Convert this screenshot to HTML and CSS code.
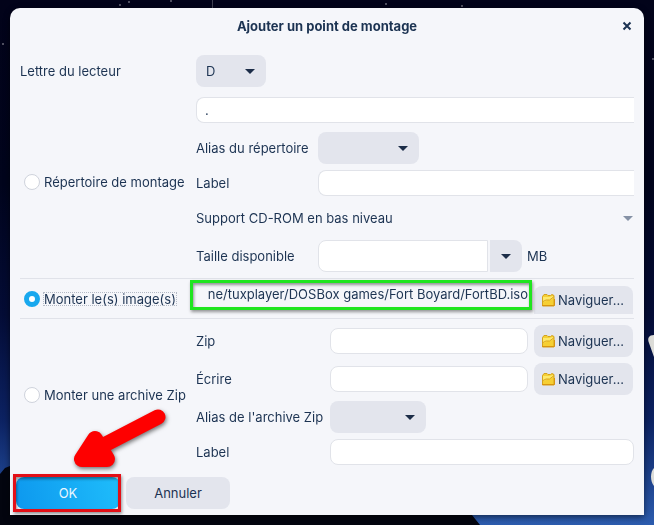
FILE: index.html
```html
<!DOCTYPE html>
<html lang="fr">
<head>
<meta charset="utf-8">
<meta name="viewport" content="width=device-width, initial-scale=1">
<title>Ajouter un point de montage</title>
<link rel="stylesheet" href="styles.css">
</head>
<body>
<svg class="sky" viewBox="0 0 654 525" preserveAspectRatio="none" aria-hidden="true">
  <defs>
    <linearGradient id="night" x1="0" y1="0" x2="0" y2="1">
      <stop offset="0" stop-color="#02031a"/>
      <stop offset=".35" stop-color="#01041c"/>
      <stop offset=".6" stop-color="#040c36"/>
      <stop offset=".8" stop-color="#0c2262"/>
      <stop offset="1" stop-color="#2c5cae"/>
    </linearGradient>
    <symbol id="folder" viewBox="0 0 14 14">
      <path d="M1.500 3.500 3 1.500h3l1 1h2.500L11 1.500l2 1V13H1.500z" fill="#f6cf33" stroke="#d3a21f"/>
      <path d="M2 4h6l4-1v2L9 7H6L4 8.500H2z" fill="#fde96b"/>
      <path d="M2 8.500 5 7h3.500L12.500 4" fill="none" stroke="#dba620"/>
      <path d="M1 12.500h12.500V6" fill="none" stroke="#d9940f"/>
    </symbol>
  </defs>
  <rect width="654" height="525" fill="url(#night)"/>
  <path d="M0 474 5 468 10 466V510H440L472 515 480 525H0z" fill="#03050f"/>
  <g fill="#6a6a78"><circle cx="120" cy="5" r="1"/><circle cx="129" cy="2" r="1"/><circle cx="171" cy="1" r="1"/><path d="M212 0h1v8h-1z" opacity=".6"/><circle cx="386" cy="4" r="1"/><circle cx="462" cy="6" r="1"/><circle cx="3" cy="44" r="1"/><circle cx="653" cy="59" r="1"/></g>
  <path d="M654 335c-5 0-7 3-5 8l5 14zM654 468c-4 4-4 13 0 18z" fill="#dcdcd8"/>
</svg>

<form class="dialog">
  <header class="titlebar">
    <h1>Ajouter un point de montage</h1>
    <button class="close" type="button" aria-label="Fermer">
      <svg viewBox="0 0 10 10" aria-hidden="true"><path d="m1.500 1.500 7 7M8.500 1.500l-7 7"/></svg>
    </button>
  </header>

  <div class="section drive">
    <label for="letter">Lettre du lecteur</label>
    <span class="drop letter"><select id="letter"><option>D</option></select></span>
  </div>

  <div class="section directory">
    <label class="choice"><input type="radio" name="kind">Répertoire de montage</label>
    <div class="fields">
      <input class="cut full" type="text" value="." aria-label="Répertoire">
      <label for="alias">Alias du répertoire</label>
      <span class="drop alias"><select id="alias"><option></option></select></span>
      <label for="dirlabel">Label</label>
      <input class="cut" id="dirlabel" type="text">
      <div class="lowlevel full"><label for="cdrom">Support CD-ROM en bas niveau</label><span class="drop flat"><select id="cdrom"><option></option></select></span></div>
      <label for="size">Taille disponible</label>
      <div class="combo">
        <input id="size" type="text">
        <button type="button" aria-label="Choisir la taille"><span class="caret"></span></button>
        <span class="unit">MB</span>
      </div>
    </div>
  </div>

  <div class="section image">
    <label class="choice"><input type="radio" name="kind" checked><span class="focus">Monter le(s) image(s)</span></label>
    <div class="picker">
      <div class="pathbox"><input type="text" value="ne/tuxplayer/DOSBox games/Fort Boyard/FortBD.iso" aria-label="Image"></div>
      <button class="browse clipped" type="button"><svg aria-hidden="true"><use href="#folder"/></svg>Naviguer...</button>
    </div>
  </div>

  <div class="section archive">
    <label class="choice"><input type="radio" name="kind">Monter une archive Zip</label>
    <div class="fields">
      <label for="zip">Zip</label>
      <div class="picker"><input id="zip" type="text"><button class="browse" type="button"><svg aria-hidden="true"><use href="#folder"/></svg>Naviguer...</button></div>
      <label for="write">Écrire</label>
      <div class="picker"><input id="write" type="text"><button class="browse" type="button"><svg aria-hidden="true"><use href="#folder"/></svg>Naviguer...</button></div>
      <label for="zipalias">Alias de l'archive Zip</label>
      <span class="drop zipalias"><select id="zipalias"><option></option></select></span>
      <label for="ziplabel">Label</label>
      <input id="ziplabel" type="text">
    </div>
  </div>

  <footer class="actions">
    <div class="okwrap">
      <button class="ok" type="button">OK</button>
      <svg class="arrow" viewBox="0 0 100 64" aria-hidden="true">
        <path d="M88 12 36 39" stroke-width="15"/>
        <path d="M25 34 12 54 37 54z" stroke-width="16"/>
      </svg>
    </div>
    <button class="cancel" type="button">Annuler</button>
  </footer>
</form>
</body>
</html>
```
FILE: styles.css
```css
* { box-sizing: border-box; }

body {
  margin: 0;
  padding: 8px 10px 10px;
  font: 13px/16px Inter, "Liberation Sans", sans-serif;
  color: #1c3352;
  background: #02031a;
}

.sky {
  position: fixed;
  inset: 0;
  z-index: -1;
  width: 100%;
  height: 100%;
}

.dialog {
  position: relative;
  padding-bottom: 6px;
  border-radius: 10px 10px 0 0;
  background: #f5f6fa;
  box-shadow: 0 2px 6px #0008;
}

.titlebar {
  display: grid;
  grid-template-columns: 34px 1fr 34px;
  align-items: center;
  height: 36px;
}

h1 {
  grid-column: 2;
  margin: 0;
  font-size: 13px;
  line-height: 16px;
  font-weight: 700;
  text-align: center;
}

button, input, select {
  margin: 0;
  font: inherit;
  color: inherit;
}

button {
  padding: 0;
  border: 0;
  border-radius: 8px;
  background: #e3e5ed;
}

.close {
  width: 20px;
  height: 20px;
  justify-self: center;
  background: none;
}

.close svg {
  display: block;
  width: 10px;
  height: 10px;
  margin: auto;
  stroke: #1c3352;
  stroke-width: 2;
}

input[type="text"] {
  width: 100%;
  min-width: 0;
  height: 26px;
  padding: 0 8px;
  border: 1px solid #e1e3e9;
  border-radius: 8px;
  background: #fff;
}

input[type="text"].cut {
  border-right: 0;
  border-radius: 8px 0 0 8px;
}

.section {
  display: grid;
  grid-template-columns: 170px minmax(0, 1fr);
  column-gap: 6px;
  align-items: center;
  margin: 0 10px;
}

.drive { padding-top: 11px; }
.directory { padding: 10px 0 6px; }
.directory .choice { padding-bottom: 6px; }

.image {
  height: 41px;
  border: 1px solid #e0e2e9;
  border-width: 1px 0;
}

.archive { padding-top: 6px; }

.choice {
  display: flex;
  align-items: center;
  gap: 4px;
  padding-left: 4px;
  white-space: nowrap;
}

.choice input {
  appearance: none;
  flex: none;
  width: 16px;
  height: 16px;
  border: 1px solid #cfd3dc;
  border-radius: 50%;
  background: #fff;
}

.choice input:checked {
  border: 5px solid #18a8ee;
}

.focus {
  line-height: 12px;
  outline: 1px dotted #b4bac6;
}

.fields {
  display: grid;
  grid-template-columns: 116px minmax(0, 1fr);
  column-gap: 6px;
  row-gap: 6px;
  align-items: center;
}

.archive .fields { grid-template-columns: 128px minmax(0, 1fr); }
.fields label { white-space: nowrap; }
.full { grid-column: 1 / -1; }
.directory .full:first-child { margin-bottom: 3px; }

.drop {
  display: block;
  position: relative;
}

.drop select {
  appearance: none;
  display: block;
  width: 100%;
  height: 32px;
  padding: 0 10px;
  border: 0;
  border-radius: 8px;
  background: #e3e5ed;
}

.drop::after, .caret {
  border: 5px solid transparent;
  border-top-color: #1c2d48;
  border-bottom: 0;
}

.drop::after {
  content: "";
  position: absolute;
  top: 14px;
  right: 11px;
  pointer-events: none;
}

.letter { width: 70px; }
.alias { width: 101px; }
.zipalias { width: 96px; }

.lowlevel {
  display: flex;
  align-items: center;
  height: 32px;
}

.flat { flex: 1; }
.flat select { background: none; }
.flat::after { right: 1px; border-top-color: #8591a5; }

.combo {
  display: flex;
  align-items: center;
  gap: 2px;
}

.combo input[type="text"] {
  width: 170px;
  height: 32px;
  border-radius: 8px 0 0 8px;
}

.combo button {
  display: grid;
  place-items: center;
  width: 32px;
  height: 32px;
  border-radius: 0 8px 8px 0;
}

.unit { margin-left: 3px; }

.picker {
  display: grid;
  grid-template-columns: minmax(0, 1fr) 99px;
  gap: 6px;
  align-items: center;
  padding-right: 1px;
}

.browse {
  display: flex;
  align-items: center;
  gap: 3px;
  height: 32px;
  padding-left: 7px;
  white-space: nowrap;
}

.browse svg { width: 14px; height: 14px; }

.clipped {
  height: 28px;
  margin-top: 2px;
  border-radius: 8px 8px 0 0;
}

.pathbox {
  align-self: start;
  position: relative;
  margin-top: -3px;
}

.pathbox input[type="text"] {
  display: block;
  padding: 0;
  border: 0;
  background: none;
  text-align: right;
}

.pathbox::after {
  content: "";
  position: absolute;
  inset: -1px -4px -3px -6px;
  border: 3px solid #1fe51f;
  box-shadow: 1px 2px 3px #0006, inset 1px 2px 3px #0006;
  pointer-events: none;
}

.actions {
  display: flex;
  gap: 6px;
  margin-top: 12px;
  padding: 0 6px;
}

.okwrap { position: relative; }

.actions button {
  width: 104px;
  height: 32px;
}

.actions .ok {
  display: block;
  color: #eaf7ff;
  background: linear-gradient(75deg, #0d98ee, #1fbdfb);
}

.okwrap::after {
  content: "";
  position: absolute;
  inset: -3px -1px -3px -3px;
  border: 3px solid #e30f16;
  box-shadow: 1px 2px 3px #0006, inset 1px 2px 3px #0006;
  pointer-events: none;
}

.arrow {
  position: absolute;
  left: 54px;
  bottom: 40px;
  width: 100px;
  height: 64px;
  overflow: visible;
  fill: #fe0000;
  stroke: #fe0000;
  stroke-linecap: round;
  stroke-linejoin: round;
  filter: drop-shadow(1px 2px 2px #0008);
  pointer-events: none;
}
```
